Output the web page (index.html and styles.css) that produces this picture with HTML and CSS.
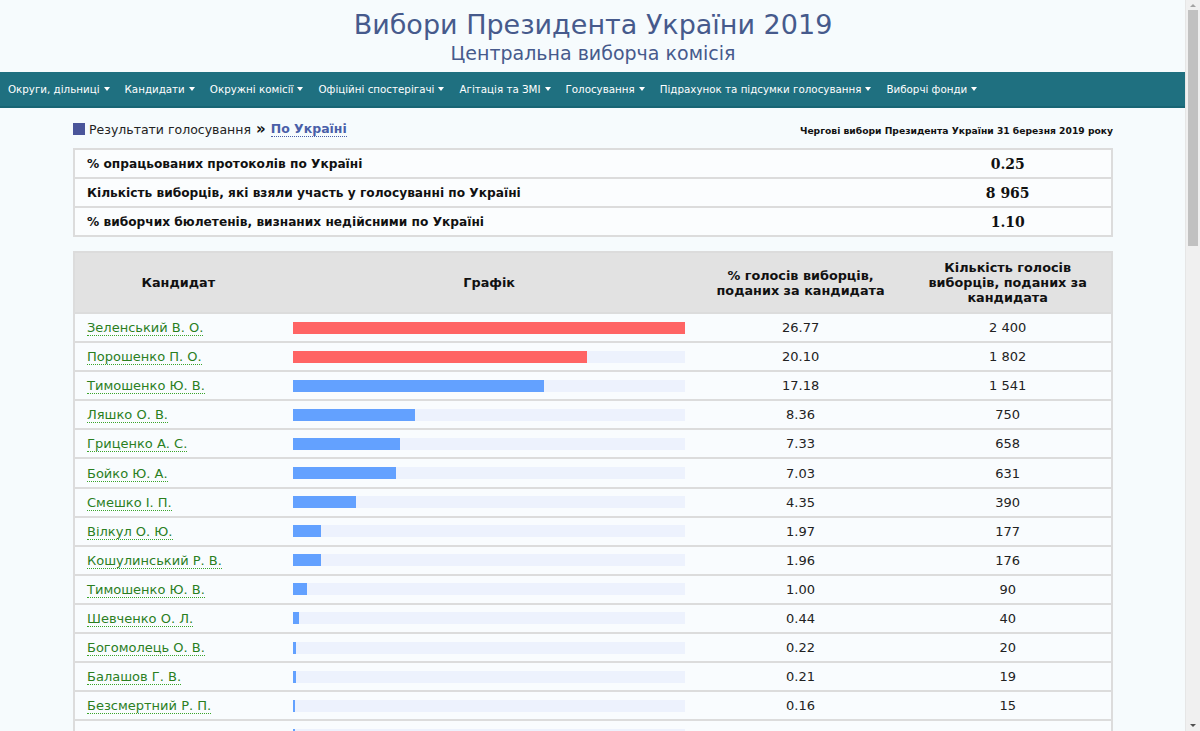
FILE: index.html
```html
<!DOCTYPE html>
<html lang="uk">
<head>
<meta charset="utf-8">
<title>Вибори Президента України 2019</title>
<link rel="stylesheet" href="styles.css">
</head>
<body>
<div class="page">
<header class="site-head">
  <h1 class="title">Вибори Президента України 2019</h1>
  <div class="subtitle">Центральна виборча комісія</div>
</header>
<nav class="menu">
  <a class="menu-item">Округи, дільниці <span class="caret"></span></a>
  <a class="menu-item">Кандидати <span class="caret"></span></a>
  <a class="menu-item">Окружні комісії <span class="caret"></span></a>
  <a class="menu-item">Офіційні спостерігачі <span class="caret"></span></a>
  <a class="menu-item">Агітація та ЗМІ <span class="caret"></span></a>
  <a class="menu-item">Голосування <span class="caret"></span></a>
  <a class="menu-item">Підрахунок та підсумки голосування <span class="caret"></span></a>
  <a class="menu-item">Виборчі фонди <span class="caret"></span></a>
</nav>
<main class="content">
  <div class="crumbs">
    <div class="crumb-left">
      <span class="crumb-mark"></span>
      <span class="crumb-text">Результати голосування</span>
      <span class="crumb-sep">»</span>
      <a class="crumb-link">По Україні</a>
    </div>
    <div class="crumb-right">Чергові вибори Президента України 31 березня 2019 року</div>
  </div>

  <table class="stats">
    <tr><td class="stat-label">% опрацьованих протоколів по Україні</td><td class="stat-val">0.25</td></tr>
    <tr><td class="stat-label">Кількість виборців, які взяли участь у голосуванні по Україні</td><td class="stat-val">8 965</td></tr>
    <tr><td class="stat-label">% виборчих бюлетенів, визнаних недійсними по Україні</td><td class="stat-val">1.10</td></tr>
  </table>

  <table class="results">
    <thead>
      <tr>
        <th class="c-name">Кандидат</th>
        <th class="c-graph">Графік</th>
        <th class="c-pct">% голосів виборців,<br>поданих за кандидата</th>
        <th class="c-cnt">Кількість голосів<br>виборців, поданих за<br>кандидата</th>
      </tr>
    </thead>
    <tbody>
      <tr><td class="c-name"><a class="cand">Зеленський В. О.</a></td><td class="c-graph"><div class="bar"><div class="fill red" style="width:100%"></div></div></td><td class="c-pct">26.77</td><td class="c-cnt">2 400</td></tr>
      <tr><td class="c-name"><a class="cand">Порошенко П. О.</a></td><td class="c-graph"><div class="bar"><div class="fill red" style="width:75.09%"></div></div></td><td class="c-pct">20.10</td><td class="c-cnt">1 802</td></tr>
      <tr><td class="c-name"><a class="cand">Тимошенко Ю. В.</a></td><td class="c-graph"><div class="bar"><div class="fill" style="width:64.18%"></div></div></td><td class="c-pct">17.18</td><td class="c-cnt">1 541</td></tr>
      <tr><td class="c-name"><a class="cand">Ляшко О. В.</a></td><td class="c-graph"><div class="bar"><div class="fill" style="width:31.23%"></div></div></td><td class="c-pct">8.36</td><td class="c-cnt">750</td></tr>
      <tr><td class="c-name"><a class="cand">Гриценко А. С.</a></td><td class="c-graph"><div class="bar"><div class="fill" style="width:27.38%"></div></div></td><td class="c-pct">7.33</td><td class="c-cnt">658</td></tr>
      <tr><td class="c-name"><a class="cand">Бойко Ю. А.</a></td><td class="c-graph"><div class="bar"><div class="fill" style="width:26.26%"></div></div></td><td class="c-pct">7.03</td><td class="c-cnt">631</td></tr>
      <tr><td class="c-name"><a class="cand">Смешко І. П.</a></td><td class="c-graph"><div class="bar"><div class="fill" style="width:16.25%"></div></div></td><td class="c-pct">4.35</td><td class="c-cnt">390</td></tr>
      <tr><td class="c-name"><a class="cand">Вілкул О. Ю.</a></td><td class="c-graph"><div class="bar"><div class="fill" style="width:7.36%"></div></div></td><td class="c-pct">1.97</td><td class="c-cnt">177</td></tr>
      <tr><td class="c-name"><a class="cand">Кошулинський Р. В.</a></td><td class="c-graph"><div class="bar"><div class="fill" style="width:7.32%"></div></div></td><td class="c-pct">1.96</td><td class="c-cnt">176</td></tr>
      <tr><td class="c-name"><a class="cand">Тимошенко Ю. В.</a></td><td class="c-graph"><div class="bar"><div class="fill" style="width:3.74%"></div></div></td><td class="c-pct">1.00</td><td class="c-cnt">90</td></tr>
      <tr><td class="c-name"><a class="cand">Шевченко О. Л.</a></td><td class="c-graph"><div class="bar"><div class="fill" style="width:1.64%"></div></div></td><td class="c-pct">0.44</td><td class="c-cnt">40</td></tr>
      <tr><td class="c-name"><a class="cand">Богомолець О. В.</a></td><td class="c-graph"><div class="bar"><div class="fill" style="width:0.82%"></div></div></td><td class="c-pct">0.22</td><td class="c-cnt">20</td></tr>
      <tr><td class="c-name"><a class="cand">Балашов Г. В.</a></td><td class="c-graph"><div class="bar"><div class="fill" style="width:0.78%"></div></div></td><td class="c-pct">0.21</td><td class="c-cnt">19</td></tr>
      <tr><td class="c-name"><a class="cand">Безсмертний Р. П.</a></td><td class="c-graph"><div class="bar"><div class="fill" style="width:0.6%"></div></div></td><td class="c-pct">0.16</td><td class="c-cnt">15</td></tr>
      <tr><td class="c-name"></td><td class="c-graph"><div class="bar"><div class="fill" style="width:0.5%"></div></div></td><td class="c-pct"></td><td class="c-cnt"></td></tr>
    </tbody>
  </table>
</main>
</div>
<div class="scrollbar" aria-hidden="true">
  <span class="sb-up"></span>
  <span class="sb-thumb"></span>
  <span class="sb-down"></span>
</div>
</body>
</html>
```

FILE: styles.css
```css
html, body {
  margin: 0;
  padding: 0;
  background: #f6fbfd;
  font-family: "DejaVu Sans", Verdana, sans-serif;
  color: #111;
  overflow: hidden;
}

.page {
  width: 1186px;
}

.site-head {
  text-align: center;
  padding-top: 8px;
  height: 72px;
  box-sizing: border-box;
}

.title {
  margin: 0;
  font-weight: normal;
  font-size: 27px;
  line-height: 34px;
  color: #465a8c;
}

.subtitle {
  font-size: 19px;
  line-height: 22px;
  color: #465a8c;
}

.menu {
  display: flex;
  align-items: center;
  height: 34px;
  background: #1f7080;
  border-bottom: 2px solid #186574;
  padding-left: 8px;
  gap: 15px;
}

.menu-item {
  color: #fff;
  font-size: 10.3px;
  white-space: nowrap;
  display: flex;
  align-items: center;
  gap: 4px;
}

.caret {
  display: inline-block;
  width: 0;
  height: 0;
  border-left: 3.5px solid transparent;
  border-right: 3.5px solid transparent;
  border-top: 4px solid #fff;
}

.content {
  width: 1040px;
  margin: 0 auto;
  padding-top: 13px;
}

.crumbs {
  display: flex;
  justify-content: space-between;
  align-items: center;
  height: 16px;
  margin-bottom: 11px;
}

.crumb-left {
  display: flex;
  align-items: center;
  font-size: 12.5px;
}

.crumb-mark {
  display: inline-block;
  width: 12px;
  height: 12px;
  background: #4a559a;
  margin-right: 4px;
}

.crumb-text {
  color: #222;
}

.crumb-sep {
  font-weight: bold;
  margin: 0 5px;
  font-size: 15px;
  line-height: 14px;
}

.crumb-link {
  color: #4a5fa8;
  font-weight: bold;
  border-bottom: 1px dotted #4a5fa8;
}

.crumb-right {
  font-size: 9.2px;
  font-weight: bold;
  color: #111;
  padding-top: 3px;
}

table {
  border-collapse: collapse;
  width: 1040px;
}

.stats {
  background: #fbfdfe;
  border: 2px solid #dcdcdc;
}

.stats td {
  border-top: 2px solid #dcdcdc;
  height: 27px;
  padding: 0;
}

.stats td.stat-label {
  font-weight: bold;
  font-size: 12.2px;
  padding-left: 12px;
  width: 80%;
}

.stat-val {
  font-family: "DejaVu Serif", "Liberation Serif", serif;
  font-weight: bold;
  font-size: 14px;
  text-align: center;
  width: 20%;
}

.results {
  margin-top: 14px;
  background: #f9fcfe;
  border: 2px solid #dcdcdc;
}

.results th {
  background: #e2e2e2;
  font-size: 12.8px;
  font-weight: bold;
  line-height: 15px;
  height: 59px;
  padding: 0;
  text-align: center;
  color: #111;
}

.results td {
  border-top: 2px solid #dcdcdc;
  height: 27.1px;
  padding: 0;
  font-size: 13px;
  text-align: center;
  color: #222;
}

.c-name { width: 20%; }
.c-graph { width: 40%; }
.c-pct { width: 20%; }
.c-cnt { width: 20%; }

.results td.c-name {
  text-align: left;
  padding-left: 12px;
}

.cand {
  color: #2b7f1f;
  border-bottom: 1px dotted #39a52a;
  font-size: 13px;
}

.bar {
  width: 392px;
  height: 12px;
  margin-left: 11px;
  background: #edf2fd;
}

.fill {
  height: 100%;
  background: #63a1ff;
  min-width: 2px;
}

.fill.red {
  background: #ff6464;
}

.scrollbar {
  position: fixed;
  top: 0;
  right: 0;
  width: 14px;
  height: 100%;
  background: #f0f0f0;
  border-left: 1px solid #e6e6e6;
}

.sb-up, .sb-down {
  position: absolute;
  left: 4px;
  width: 0;
  height: 0;
  border-left: 3px solid transparent;
  border-right: 3px solid transparent;
}

.sb-up {
  top: 4px;
  border-bottom: 3px solid #a3a3a3;
}

.sb-down {
  bottom: 4px;
  border-top: 3px solid #505050;
}

.sb-thumb {
  position: absolute;
  top: 10px;
  left: 2px;
  width: 10px;
  height: 236px;
  background: #c1c1c1;
}
```
